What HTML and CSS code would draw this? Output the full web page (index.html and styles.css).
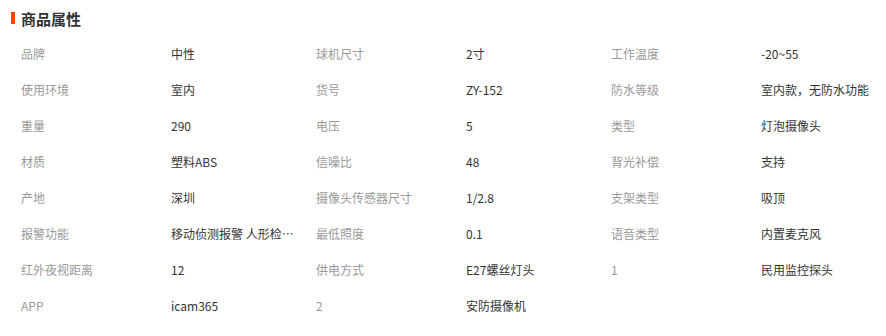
FILE: index.html
```html
<!DOCTYPE html>
<html lang="zh-CN">
<head>
<meta charset="utf-8">
<title>商品属性</title>
<link rel="stylesheet" href="styles.css">
</head>
<body>
<section class="attrs">
  <h2 class="attrs-title"><span class="attrs-bar"></span>商品属性</h2>
  <div class="attrs-grid">
    <span class="k">品牌</span><span class="v">中性</span>
    <span class="k">球机尺寸</span><span class="v">2寸</span>
    <span class="k">工作温度</span><span class="v">-20~55</span>

    <span class="k">使用环境</span><span class="v">室内</span>
    <span class="k">货号</span><span class="v">ZY-152</span>
    <span class="k">防水等级</span><span class="v">室内款，无防水功能</span>

    <span class="k">重量</span><span class="v">290</span>
    <span class="k">电压</span><span class="v">5</span>
    <span class="k">类型</span><span class="v">灯泡摄像头</span>

    <span class="k">材质</span><span class="v">塑料ABS</span>
    <span class="k">信噪比</span><span class="v">48</span>
    <span class="k">背光补偿</span><span class="v">支持</span>

    <span class="k">产地</span><span class="v">深圳</span>
    <span class="k">摄像头传感器尺寸</span><span class="v">1/2.8</span>
    <span class="k">支架类型</span><span class="v">吸顶</span>

    <span class="k">报警功能</span><span class="v" title="移动侦测报警 人形检测">移动侦测报警 人形检…</span>
    <span class="k">最低照度</span><span class="v">0.1</span>
    <span class="k">语音类型</span><span class="v">内置麦克风</span>

    <span class="k">红外夜视距离</span><span class="v">12</span>
    <span class="k">供电方式</span><span class="v">E27螺丝灯头</span>
    <span class="k">1</span><span class="v">民用监控探头</span>

    <span class="k">APP</span><span class="v">icam365</span>
    <span class="k">2</span><span class="v">安防摄像机</span>
  </div>
</section>
</body>
</html>
```

FILE: styles.css
```css
html, body {
  margin: 0;
  padding: 0;
  background: #fff;
}

body {
  font-family: "Noto Sans CJK SC", "Liberation Sans", sans-serif;
  font-size: 12px;
  color: #333;
}

.attrs {
  width: 886px;
}

.attrs-title {
  display: flex;
  align-items: center;
  height: 36px;
  margin: 0;
  padding: 0 0 0 11px;
  box-sizing: border-box;
  font-size: 15px;
  font-weight: bold;
  color: #333;
  line-height: 1;
}

.attrs-bar {
  display: inline-block;
  width: 4px;
  height: 12px;
  background: #ff4400;
  margin-right: 6px;
}

.attrs-grid {
  display: grid;
  grid-template-columns: 150px 145px 150px 145px 150px 1fr;
  grid-auto-rows: 36px;
  padding-left: 21px;
  line-height: 36px;
}

.k {
  color: #999;
  white-space: nowrap;
}

.v {
  color: #333;
  white-space: nowrap;
}
```
